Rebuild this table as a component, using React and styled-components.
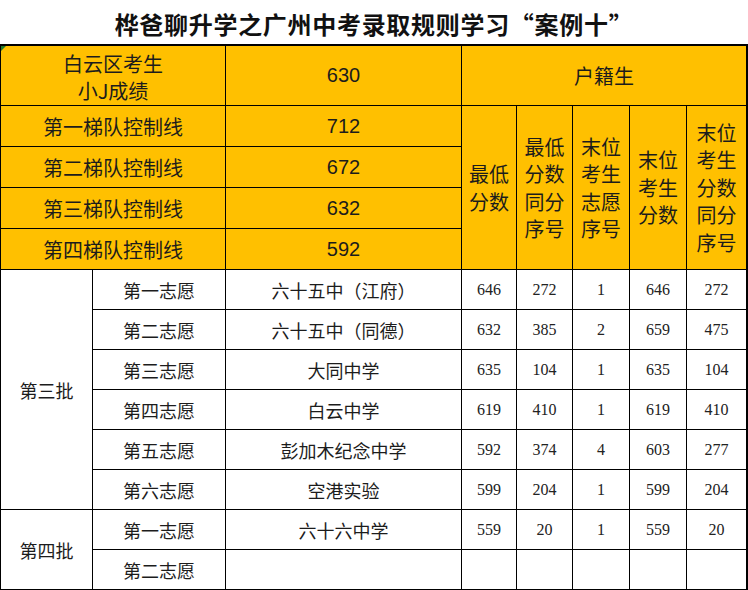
import React from 'react';
import styled, { createGlobalStyle } from 'styled-components';

const GlobalStyle = createGlobalStyle`
  html, body {
    margin: 0;
    padding: 0;
    background: #fff;
  }
  * {
    box-sizing: border-box;
  }
`;

const Page = styled.div`
  width: 748px;
  height: 590px;
  overflow: hidden;
  background: #fff;
  font-family: "Noto Sans CJK SC", "Noto Sans", sans-serif;
  color: #1a1a1a;
`;

const Title = styled.h1`
  margin: 0;
  height: 44px;
  padding-top: 3px;
  display: flex;
  align-items: center;
  justify-content: center;
  font-size: 24px;
  font-weight: 700;
  color: #111;
  letter-spacing: 0.7px;
`;

const Grid = styled.div`
  display: grid;
  grid-template-columns: 92px 133px 236px 55px 56px 57px 57px 60px;
  grid-template-rows: 60px repeat(4, 41px) repeat(8, 40px);
  border-top: 2px solid #000;
  border-left: 1px solid #000;
  border-right: 2px solid #000;
  width: 748px;
`;

const Cell = styled.div`
  position: relative;
  display: flex;
  align-items: center;
  justify-content: center;
  text-align: center;
  border-right: 1px solid #000;
  border-bottom: 1px solid #000;
  background: ${p => (p.$head ? '#FFC000' : '#fff')};
  grid-column: ${p => (p.$cols ? `span ${p.$cols}` : 'auto')};
  grid-row: ${p => (p.$rows ? `span ${p.$rows}` : 'auto')};
  font-size: ${p => (p.$head ? '20px' : '18px')};
  line-height: ${p => (p.$head ? '27px' : '22px')};
  color: #1c1c1c;
`;

const Flagged = styled(Cell)`
  padding-top: 2px;
  &::before {
    content: '';
    position: absolute;
    left: 0;
    top: 0;
    border-top: 5px solid #1d7a2c;
    border-right: 5px solid transparent;
  }
`;

const HeadNum = styled.span`
  font-family: "Liberation Sans", Arial, sans-serif;
  font-size: 20px;
`;

const ColHead = styled.span`
  font-size: 20px;
  line-height: 27.5px;
`;

const Num = styled.span`
  font-family: "Liberation Serif", "Times New Roman", serif;
  font-size: 16px;
  color: #222;
`;

const tiers = [
  ['第一梯队控制线', '712'],
  ['第二梯队控制线', '672'],
  ['第三梯队控制线', '632'],
  ['第四梯队控制线', '592'],
];

const colHeads = [
  ['最低', '分数'],
  ['最低', '分数', '同分', '序号'],
  ['末位', '考生', '志愿', '序号'],
  ['末位', '考生', '分数'],
  ['末位', '考生', '分数', '同分', '序号'],
];

const batches = [
  {
    name: '第三批',
    rows: [
      ['第一志愿', '六十五中（江府）', '646', '272', '1', '646', '272'],
      ['第二志愿', '六十五中（同德）', '632', '385', '2', '659', '475'],
      ['第三志愿', '大同中学', '635', '104', '1', '635', '104'],
      ['第四志愿', '白云中学', '619', '410', '1', '619', '410'],
      ['第五志愿', '彭加木纪念中学', '592', '374', '4', '603', '277'],
      ['第六志愿', '空港实验', '599', '204', '1', '599', '204'],
    ],
  },
  {
    name: '第四批',
    rows: [
      ['第一志愿', '六十六中学', '559', '20', '1', '559', '20'],
      ['第二志愿', '', '', '', '', '', ''],
    ],
  },
];

const App = () => (
  <Page>
    <GlobalStyle />
    <Title>桦爸聊升学之广州中考录取规则学习“案例十”</Title>
    <Grid>
      <Flagged $head $cols={2}>
        <span>白云区考生<br />小J成绩</span>
      </Flagged>
      <Cell $head><HeadNum>630</HeadNum></Cell>
      <Cell $head $cols={5}>户籍生</Cell>

      {tiers.map(([label, score], i) => (
        <React.Fragment key={label}>
          <Cell $head $cols={2}>{label}</Cell>
          <Cell $head><HeadNum>{score}</HeadNum></Cell>
          {i === 0 && colHeads.map((lines, j) => (
            <Cell $head $rows={4} key={j}>
              <ColHead>
                {lines.map((l, k) => (
                  <React.Fragment key={k}>{l}{k < lines.length - 1 && <br />}</React.Fragment>
                ))}
              </ColHead>
            </Cell>
          ))}
        </React.Fragment>
      ))}

      {batches.map(batch => (
        <React.Fragment key={batch.name}>
          {batch.rows.map((r, i) => (
            <React.Fragment key={i}>
              {i === 0 && <Cell $rows={batch.rows.length}>{batch.name}</Cell>}
              <Cell>{r[0]}</Cell>
              <Cell>{r[1]}</Cell>
              {r.slice(2).map((v, k) => (
                <Cell key={k}><Num>{v}</Num></Cell>
              ))}
            </React.Fragment>
          ))}
        </React.Fragment>
      ))}
    </Grid>
  </Page>
);

export default App;
